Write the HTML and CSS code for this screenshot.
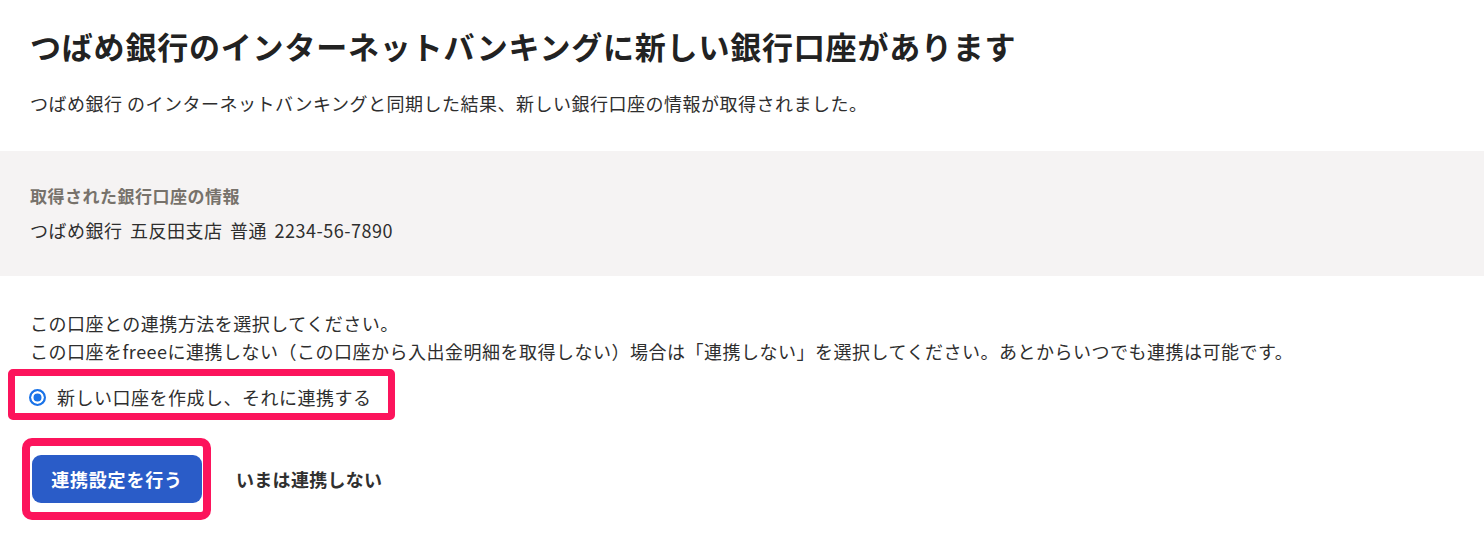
FILE: index.html
```html
<!DOCTYPE html>
<html lang="ja">
<head>
<meta charset="utf-8">
<title>新しい銀行口座</title>
<link rel="stylesheet" href="styles.css">
</head>
<body>
<main class="page">
  <header class="header">
    <h1 class="title">つばめ銀行のインターネットバンキングに新しい銀行口座があります</h1>
    <p class="lead">つばめ銀行 のインターネットバンキングと同期した結果、新しい銀行口座の情報が取得されました。</p>
  </header>
  <section class="account-box">
    <p class="account-label">取得された銀行口座の情報</p>
    <p class="account-value">つばめ銀行 五反田支店 普通 2234-56-7890</p>
  </section>
  <section class="body">
    <p class="instructions">この口座との連携方法を選択してください。<br>この口座をfreeeに連携しない（この口座から入出金明細を取得しない）場合は「連携しない」を選択してください。あとからいつでも連携は可能です。</p>
    <div class="highlight highlight-radio">
      <label class="radio-row">
        <input class="radio" type="radio" name="link" checked>
        <span>新しい口座を作成し、それに連携する</span>
      </label>
    </div>
    <div class="actions">
      <div class="highlight highlight-btn">
        <button class="btn-primary" type="button">連携設定を行う</button>
      </div>
      <button class="btn-link" type="button">いまは連携しない</button>
    </div>
  </section>
</main>
</body>
</html>
```
FILE: styles.css
```css
* { box-sizing: border-box; }
body {
  margin: 0;
  background: #ffffff;
  color: #2e2e2e;
  font-family: "Noto Sans CJK JP", "Noto Sans", sans-serif;
  letter-spacing: 0.5px;
}
p { margin: 0; }
.header { padding: 24px 30px 0; }
.title {
  margin: 0;
  font-size: 31px;
  line-height: 43px;
  font-weight: 700;
  color: #222222;
  letter-spacing: 0.8px;
}
.lead {
  margin-top: 22px;
  font-size: 18px;
  line-height: 28px;
}
.account-box {
  margin-top: 34px;
  background: #f5f3f3;
  padding: 31px 30px 32px;
}
.account-label {
  font-size: 17px;
  line-height: 28px;
  font-weight: 700;
  color: #77726b;
}
.account-value {
  margin-top: 6px;
  font-size: 18px;
  line-height: 28px;
  word-spacing: 3px;
}
.body { padding: 33px 30px 0; }
.instructions {
  font-size: 18px;
  line-height: 28px;
}
.highlight {
  border: 7px solid #fc145c;
  border-radius: 5px;
  background: #ffffff;
}
.highlight-radio {
  display: inline-flex;
  margin: 4px 0 0 -22px;
  padding: 7px 16px 2px 14px;
}
.radio-row {
  display: flex;
  align-items: center;
  gap: 11px;
  font-size: 18px;
  line-height: 28px;
}
.radio {
  appearance: none;
  -webkit-appearance: none;
  margin: 0;
  width: 17px;
  height: 17px;
  border-radius: 50%;
  border: 2px solid #1a73e8;
  background: #1a73e8;
  box-shadow: inset 0 0 0 2.5px #ffffff;
}
.actions {
  display: flex;
  align-items: center;
  gap: 25px;
  margin-top: 18px;
}
.highlight-btn {
  border-width: 8px;
  border-radius: 10px;
  margin-left: -8px;
  padding: 9px 1px 9px 2px;
}
.btn-primary {
  display: block;
  width: 170px;
  height: 48px;
  border: none;
  border-radius: 9px;
  background: #2a5cc8;
  color: #ffffff;
  font-family: inherit;
  font-size: 18px;
  font-weight: 700;
  letter-spacing: 0.8px;
}
.btn-link {
  border: none;
  background: none;
  padding: 0;
  color: #303030;
  font-family: inherit;
  font-size: 18px;
  font-weight: 700;
  letter-spacing: 0.3px;
}
```
